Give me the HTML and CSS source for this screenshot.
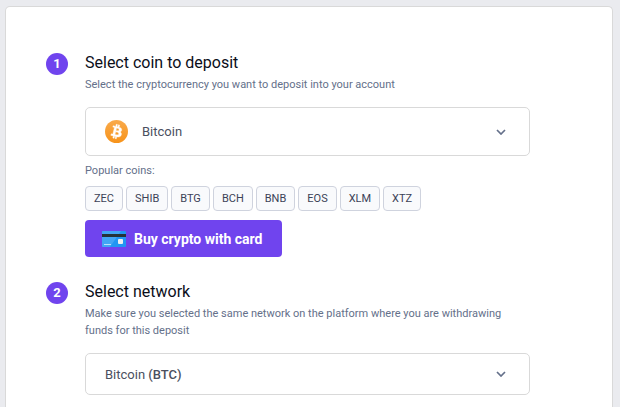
FILE: index.html
```
<!DOCTYPE html>
<html lang="en">
<head>
  <meta charset="UTF-8" />
  <meta name="viewport" content="width=device-width, initial-scale=1" />
  <title>Deposit crypto</title>
  <link rel="stylesheet" href="styles.css">
</head>
<body>

<main class="card">

  <!-- Step 1: coin -->
  <section class="step">
    <span class="step-number">1</span>
    <div class="step-body">
      <h2><label for="coin">Select coin to deposit</label></h2>
      <p class="hint">Select the cryptocurrency you want to deposit into your account</p>

      <div class="select-box">
        <svg class="coin-icon" viewBox="0 0 32 32" aria-hidden="true">
          <defs>
            <linearGradient id="btc" x1="0" y1="0" x2="0" y2="1">
              <stop offset="0" stop-color="#f9aa4b" />
              <stop offset="1" stop-color="#f7931a" />
            </linearGradient>
          </defs>
          <circle cx="16" cy="16" r="16" fill="url(#btc)" />
          <path fill="#fff" stroke="#fff" stroke-width=".6" d="M23.2 14c.3-2.100-1.300-3.300-3.500-4l.7-2.900-1.700-.4-.7 2.800-1.400-.3.7-2.800-1.700-.4-.7 2.900-1.100-.3-2.400-.6-.5 1.900s1.300.3 1.300.3c.7.2.8.6.8 1l-2 7.900c-.1.200-.3.500-.8.400 0 0-1.300-.3-1.300-.3l-.9 2 2.300.6 1.300.3-.7 2.900 1.700.4.7-2.900 1.400.4-.7 2.900 1.700.4.7-2.900c3 .6 5.200.3 6.200-2.400.7-2.100 0-3.400-1.600-4.200 1.100-.3 2-1 2.200-2.700zm-4 5.600c-.5 2.100-4.200 1-5.300.7l.9-3.800c1.200.3 5 .9 4.400 3.100zm.5-5.700c-.5 2-3.500 1-4.500.7l.9-3.400c1 .2 4.100.7 3.600 2.700z" />
        </svg>
        <select id="coin" class="select select-coin">
          <option>Bitcoin</option>
          <option>Ethereum</option>
          <option>Litecoin</option>
        </select>
        <svg class="chevron" viewBox="0 0 10 6" aria-hidden="true"><path d="M1 1l4 4 4-4" /></svg>
      </div>

      <p class="popular">Popular coins:</p>
      <div class="coins">
        <button type="button" class="coin">ZEC</button>
        <button type="button" class="coin">SHIB</button>
        <button type="button" class="coin">BTG</button>
        <button type="button" class="coin">BCH</button>
        <button type="button" class="coin">BNB</button>
        <button type="button" class="coin">EOS</button>
        <button type="button" class="coin">XLM</button>
        <button type="button" class="coin">XTZ</button>
      </div>

      <button type="button" class="buy-btn">
        <svg class="card-icon" viewBox="0 0 24 16" aria-hidden="true">
          <rect width="24" height="16" rx="1" fill="#2196f3" />
          <path d="M1 0h18L8 16H1a1 1 0 0 1-1-1V1a1 1 0 0 1 1-1z" fill="#42a5f5" />
          <rect y="3" width="24" height="3" fill="#263238" />
          <rect x="16" y="8" width="5" height="5" rx="1" fill="#eceff1" />
          <rect x="2" y="13" width="7" height="1" fill="#bbdefb" />
        </svg>
        Buy crypto with card
      </button>
    </div>
  </section>

  <!-- Step 2: network -->
  <section class="step">
    <span class="step-number">2</span>
    <div class="step-body">
      <h2><label for="network">Select network</label></h2>
      <p class="hint">Make sure you selected the same network on the platform where you are withdrawing funds for this deposit</p>

      <div class="select-box">
        <select id="network" class="select select-network">
          <button><selectedcontent></selectedcontent></button>
          <option>Bitcoin <b>(BTC)</b></option>
          <option>BNB Smart Chain <b>(BEP20)</b></option>
        </select>
        <svg class="chevron" viewBox="0 0 10 6" aria-hidden="true"><path d="M1 1l4 4 4-4" /></svg>
      </div>
    </div>
  </section>

</main>

</body>
</html>
```

FILE: styles.css
```
* {
  box-sizing: border-box;
}
body {
  margin: 6px 7px 0 5px;
  background: #eaebef;
  font-family: Roboto, "Liberation Sans", sans-serif;
  color: #0b0e1a;
}
button, select {
  font-family: inherit;
  cursor: pointer;
}
.card {
  min-height: calc(100vh - 6px);
  padding: 44px 40px 0;
  background: #fff;
  border: 1px solid #d9d9d9;
  border-bottom: none;
  border-radius: 5px 5px 0 0;
}
.step {
  display: flex;
  gap: 17px;
  margin-bottom: 23px;
}
.step:last-child {
  margin-bottom: 0;
}
.step-number {
  flex: none;
  width: 22px;
  height: 22px;
  margin-top: 2px;
  border-radius: 50%;
  background: #7044ee;
  color: #fff;
  font-size: 13px;
  font-weight: 700;
  line-height: 22px;
  text-align: center;
}
.step-body {
  flex: 1;
  max-width: 445px;
}
h2 {
  margin: 0 0 1px;
  font-size: 16px;
  font-weight: 400;
  line-height: 24px;
}
.hint, .popular {
  margin: 0;
  font-size: 11px;
  line-height: 17px;
  color: #64708a;
}
.hint {
  margin-bottom: 14px;
}
.popular {
  margin: 6px 0 7px;
}

/* Drop-downs */
.select-box {
  display: grid;
  align-items: center;
}
.select-box > * {
  grid-area: 1 / 1;
}
.select {
  appearance: none;
  width: 100%;
  padding: 0 40px 0 19px;
  background: #fff;
  border: 1px solid #d9d9d9;
  border-radius: 5px;
  color: #4a5060;
  font-size: 13px;
}
.select-coin {
  height: 49px;
  padding-left: 56px;
}
.select-network {
  appearance: base-select;
  display: flex;
  align-items: center;
  height: 42px;
}
.select-network::picker-icon {
  display: none;
}
.select b {
  font-weight: 500;
}
.coin-icon {
  z-index: 1;
  width: 23px;
  height: 23px;
  margin-left: 20px;
  pointer-events: none;
}
.chevron {
  z-index: 1;
  justify-self: end;
  width: 10px;
  height: 6px;
  margin-right: 24px;
  fill: none;
  stroke: #64708a;
  stroke-width: 1.7;
  pointer-events: none;
}

.coins {
  display: flex;
  flex-wrap: wrap;
  gap: 3px;
}
.coin {
  height: 25px;
  padding: 0 8px;
  background: #f9fafc;
  border: 1px solid #cfd3de;
  border-radius: 4px;
  color: #3c4257;
  font-size: 11px;
}
.buy-btn {
  display: flex;
  align-items: center;
  gap: 8px;
  height: 37px;
  margin-top: 9px;
  padding: 0 20px 0 17px;
  background: #7044ee;
  border: none;
  border-radius: 4px;
  color: #fff;
  font-size: 14px;
  font-weight: 700;
}
.card-icon {
  width: 24px;
  height: 16px;
}
```
